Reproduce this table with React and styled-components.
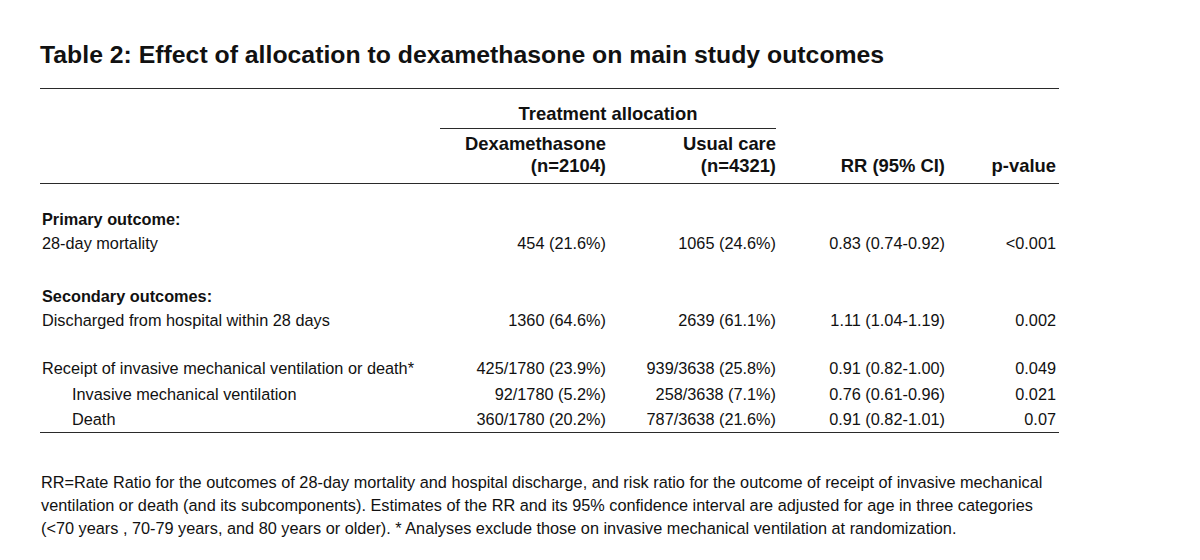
import React from 'react';
import styled, { createGlobalStyle } from 'styled-components';

const GlobalStyle = createGlobalStyle`
  html, body {
    margin: 0;
    padding: 0;
    background: #ffffff;
  }
  body {
    font-family: "Liberation Sans", Arial, Helvetica, sans-serif;
    color: #111111;
  }
`;

const rows = [
  { kind: 'section', label: 'Primary outcome:', gap: 23 },
  { label: '28-day mortality', dex: '454 (21.6%)', usual: '1065 (24.6%)', rr: '0.83 (0.74-0.92)', p: '<0.001' },
  { kind: 'section', label: 'Secondary outcomes:', gap: 28 },
  { label: 'Discharged from hospital within 28 days', dex: '1360 (64.6%)', usual: '2639 (61.1%)', rr: '1.11 (1.04-1.19)', p: '0.002' },
  { label: 'Receipt of invasive mechanical ventilation or death*', dex: '425/1780 (23.9%)', usual: '939/3638 (25.8%)', rr: '0.91 (0.82-1.00)', p: '0.049', gap: 23 },
  { label: 'Invasive mechanical ventilation', dex: '92/1780 (5.2%)', usual: '258/3638 (7.1%)', rr: '0.76 (0.61-0.96)', p: '0.021', indent: true, gap: 1.5 },
  { label: 'Death', dex: '360/1780 (20.2%)', usual: '787/3638 (21.6%)', rr: '0.91 (0.82-1.01)', p: '0.07', indent: true, gap: 0.5 },
];

const Page = styled.div`
  padding: 40px 0 0 40px;
  width: 1019px;
`;

const Title = styled.h1`
  margin: 0;
  font-size: 24.8px;
  line-height: 30px;
  font-weight: 700;
`;

const Rule = styled.div`
  height: 1px;
  background: #2a2a2a;
  margin-top: ${(p) => p.$top || 0}px;
`;

const Grid = styled.div`
  display: grid;
  grid-template-columns: 400px 166px 170px 169px 111px;
`;

const Head = styled(Grid)`
  padding-top: 14px;
  padding-bottom: 6px;
  font-size: 18.4px;
  line-height: 22px;
  font-weight: 700;
`;

const Span = styled.div`
  grid-column: 2 / 4;
  text-align: center;
  padding-bottom: 3px;
  border-bottom: 1px solid #2a2a2a;
  margin-bottom: 4px;
`;

const HeadCell = styled.div`
  grid-column: ${(p) => p.$col};
  grid-row: 2;
  text-align: right;
  align-self: end;
`;

const Body = styled.div`
  padding-bottom: 1px;
  font-size: 16.3px;
  line-height: 24.5px;
`;

const Row = styled(Grid)`
  margin-top: ${(p) => p.$gap || 0}px;
`;

const Label = styled.div`
  padding-left: ${(p) => (p.$indent ? 32 : 2)}px;
  font-weight: ${(p) => (p.$bold ? 700 : 400)};
  white-space: nowrap;
`;

const Num = styled.div`
  text-align: right;
  white-space: nowrap;
`;

const Note = styled.p`
  margin: 38px 0 0 1px;
  font-size: 16.3px;
  line-height: 23px;
  white-space: nowrap;
`;

export default function App() {
  return (
    <>
      <GlobalStyle />
      <Page>
        <Title>Table 2: Effect of allocation to dexamethasone on main study outcomes</Title>
        <Rule $top={17.6} />
        <Head>
          <Span>Treatment allocation</Span>
          <HeadCell $col={2}>Dexamethasone<br />(n=2104)</HeadCell>
          <HeadCell $col={3}>Usual care<br />(n=4321)</HeadCell>
          <HeadCell $col={4}>RR (95% CI)</HeadCell>
          <HeadCell $col={5}>p-value</HeadCell>
        </Head>
        <Rule />
        <Body>
          {rows.map((r) =>
            r.kind === 'section' ? (
              <Row key={r.label} $gap={r.gap}>
                <Label $bold>{r.label}</Label>
              </Row>
            ) : (
              <Row key={r.label} $gap={r.gap}>
                <Label $indent={r.indent}>{r.label}</Label>
                <Num>{r.dex}</Num>
                <Num>{r.usual}</Num>
                <Num>{r.rr}</Num>
                <Num>{r.p}</Num>
              </Row>
            )
          )}
        </Body>
        <Rule />
        <Note>
          RR=Rate Ratio for the outcomes of 28-day mortality and hospital discharge, and risk ratio for the outcome of receipt of invasive mechanical
          <br />
          ventilation or death (and its subcomponents). Estimates of the RR and its 95% confidence interval are adjusted for age in three categories
          <br />
          (&lt;70 years , 70-79 years, and 80 years or older). * Analyses exclude those on invasive mechanical ventilation at randomization.
        </Note>
      </Page>
    </>
  );
}
